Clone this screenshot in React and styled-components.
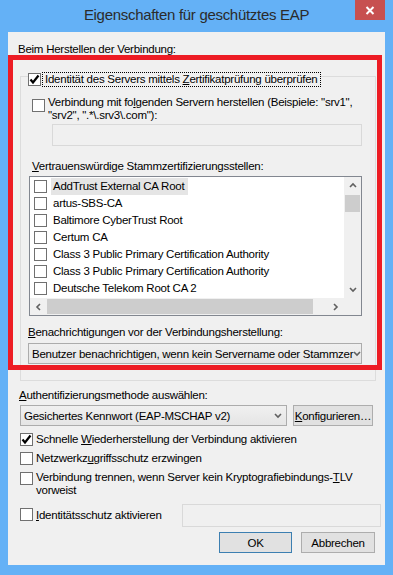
import React from "react";
import styled, { createGlobalStyle } from "styled-components";

const GlobalStyle = createGlobalStyle`
  html, body {
    margin: 0;
    padding: 0;
  }
  body {
    font-family: "Liberation Sans", Arial, sans-serif;
    font-size: 11.5px;
    letter-spacing: -0.25px;
    color: #000;
  }
`;

const Window = styled.div`
  position: relative;
  width: 393px;
  height: 575px;
  box-sizing: border-box;
  padding: 0 8px 10px 8px;
  background: #64b1f6;
  display: flex;
  flex-direction: column;
  overflow: hidden;
`;

const TitleBar = styled.div`
  height: 32px;
  flex: none;
  display: grid;
  grid-template-columns: 1fr auto 1fr;
`;

const Title = styled.div`
  grid-column: 2;
  font-size: 15px;
  letter-spacing: -0.3px;
  line-height: 30px;
  color: #2b2b2b;
`;

const CloseButton = styled.div`
  grid-column: 3;
  justify-self: end;
  width: 30px;
  height: 20px;
  background: #c75050;
  display: flex;
  align-items: center;
  justify-content: center;
`;

const Client = styled.div`
  flex: 1;
  background: #f0f0f0;
  display: flex;
  flex-direction: column;
  padding-top: 10px;
`;

const Label = styled.div`
  line-height: 15px;
  margin-left: ${({ $left }) => $left || 0}px;
  margin-top: ${({ $top }) => $top || 0}px;
  white-space: nowrap;
`;

const Group = styled.fieldset`
  margin: 9px 9px 0 12px;
  padding: 0 0 16px 0;
  border: 1px solid #dcdcdc;
  display: flex;
  flex-direction: column;
  align-items: flex-start;
  min-width: 0;
`;

const Legend = styled.legend`
  padding: 6px 0 0 0;
  margin-left: 7px;
`;

const LegendInner = styled.span`
  display: flex;
  align-items: center;
  height: 14px;
  gap: 2px;
`;

const Focus = styled.span`
  outline: 1px dotted #000;
  outline-offset: 0;
  line-height: 13px;
  padding: 0 2px 0 2px;
  white-space: nowrap;
`;

const CheckRow = styled.div`
  display: flex;
  align-items: flex-start;
  gap: 3px;
  margin-left: ${({ $left }) => $left || 0}px;
  margin-top: ${({ $top }) => $top || 0}px;
`;

const CheckText = styled.div`
  line-height: ${({ $lh }) => $lh || 15}px;
  white-space: nowrap;
`;

const Box = styled.span`
  flex: none;
  box-sizing: border-box;
  width: 13px;
  height: 13px;
  border: 1px solid #707070;
  background: #fff;
  display: flex;
  align-items: center;
  justify-content: center;
  margin-top: ${({ $top }) => $top || 0}px;
`;

const TextInput = styled.div`
  box-sizing: border-box;
  width: ${({ $w }) => $w}px;
  height: ${({ $h }) => $h}px;
  margin-left: ${({ $left }) => $left || 0}px;
  margin-top: ${({ $top }) => $top || 0}px;
  margin-right: ${({ $right }) => $right || 0}px;
  border: 1px solid #d9d9d9;
  background: #f0f0f0;
`;

const List = styled.div`
  box-sizing: border-box;
  width: 333px;
  height: 140px;
  margin-left: 8px;
  margin-top: 2px;
  border: 1px solid #828790;
  background: #fff;
  display: grid;
  grid-template-columns: 1fr 17px;
  grid-template-rows: 1fr 17px;
`;

const ListBody = styled.div`
  overflow: hidden;
  padding-top: 1px;
`;

const ListRow = styled.div`
  height: 17px;
  display: flex;
  align-items: center;
  padding-left: 4px;
  gap: 4px;
`;

const RowText = styled.span`
  line-height: 17px;
  padding: 0 4px 0 2px;
  background: ${({ $sel }) => ($sel ? "#e5e5e5" : "transparent")};
  white-space: nowrap;
`;

const VScroll = styled.div`
  background: #f0f0f0;
  display: flex;
  flex-direction: column;
`;

const ScrollBtn = styled.div`
  flex: none;
  width: 17px;
  height: 17px;
  display: flex;
  align-items: center;
  justify-content: center;
`;

const VThumb = styled.div`
  height: 17px;
  margin: 1px 1px 0 1px;
  background: #cdcdcd;
`;

const Spacer = styled.div`
  flex: 1;
`;

const HScroll = styled.div`
  background: #f0f0f0;
  display: flex;
  align-items: stretch;
`;

const HThumb = styled.div`
  width: 266px;
  margin: 1px 0 1px 0;
  background: #cdcdcd;
`;

const Corner = styled.div`
  background: #f0f0f0;
`;

const Combo = styled.div`
  box-sizing: border-box;
  width: ${({ $w }) => $w}px;
  height: 21px;
  margin-left: ${({ $left }) => $left || 0}px;
  margin-top: ${({ $top }) => $top || 0}px;
  border: 1px solid #acacac;
  background: linear-gradient(#f0f0f0, #e5e5e5);
  display: flex;
  align-items: center;
  padding: 0 0 0 3px;
`;

const ComboText = styled.span`
  flex: 1;
  white-space: nowrap;
`;

const ComboArrow = styled.span`
  width: 17px;
  display: flex;
  justify-content: center;
`;

const Row = styled.div`
  display: flex;
  align-items: center;
  gap: ${({ $gap }) => $gap || 0}px;
  margin-left: ${({ $left }) => $left || 0}px;
  margin-top: ${({ $top }) => $top || 0}px;
`;

const Button = styled.div`
  box-sizing: border-box;
  width: ${({ $w }) => $w}px;
  height: 21px;
  border: 1px solid ${({ $default }) => ($default ? "#3c7fb1" : "#adadad")};
  background: #e1e1e1;
  display: flex;
  align-items: center;
  justify-content: center;
  white-space: nowrap;
`;

const ButtonBar = styled.div`
  display: flex;
  justify-content: flex-end;
  gap: 9px;
  margin: 5px 10px 0 0;
`;

const Annotation = styled.div`
  position: absolute;
  left: 8px;
  top: 55px;
  width: 374px;
  height: 315px;
  box-sizing: border-box;
  border: 5px solid #ed1c24;
  pointer-events: none;
`;

const Chevron = ({ dir }) => {
  const paths = {
    up: "M1 5 L4 2 L7 5",
    down: "M1 2 L4 5 L7 2",
    left: "M5 1 L2 4 L5 7",
    right: "M2 1 L5 4 L2 7",
  };
  return (
    <svg width="8" height="8" viewBox="0 0 8 8">
      <path d={paths[dir]} fill="none" stroke="#606060" strokeWidth="1.6" />
    </svg>
  );
};

const Check = ({ checked, top }) => (
  <Box $top={top}>
    {checked && (
      <svg width="11" height="11" viewBox="0 0 11 11">
        <path d="M1.5 5.5 L4 8.5 L9.5 1.5" fill="none" stroke="#000" strokeWidth="2.2" />
      </svg>
    )}
  </Box>
);

const certs = [
  "AddTrust External CA Root",
  "artus-SBS-CA",
  "Baltimore CyberTrust Root",
  "Certum CA",
  "Class 3 Public Primary Certification Authority",
  "Class 3 Public Primary Certification Authority",
  "Deutsche Telekom Root CA 2",
];

export default function App() {
  return (
    <>
      <GlobalStyle />
      <Window>
        <TitleBar>
          <Title>Eigenschaften für geschütztes EAP</Title>
          <CloseButton>
            <svg width="10" height="9" viewBox="0 0 10 9">
              <path d="M1.5 1 L8.5 8 M8.5 1 L1.5 8" stroke="#fff" strokeWidth="2" />
            </svg>
          </CloseButton>
        </TitleBar>
        <Client>
          <Label $left={10}>Beim Herstellen der Verbindung:</Label>
          <Group>
            <Legend>
              <LegendInner>
                <Check checked />
                <Focus>
                  Identität des Servers mittels <u>Z</u>ertifikatprüfung überprüfen
                </Focus>
              </LegendInner>
            </Legend>
            <CheckRow $left={11} $top={10}>
              <Check top={3} />
              <CheckText $lh={13}>
                Verbindung mit fo<u>l</u>genden Servern herstellen (Beispiele: "srv1",
                <br />
                "srv2", ".*\.srv3\.com"):
              </CheckText>
            </CheckRow>
            <TextInput $w={310} $h={22} $left={31} $top={2} />
            <Label $left={11} $top={13}>
              <u>V</u>ertrauenswürdige Stammzertifizierungsstellen:
            </Label>
            <List>
              <ListBody>
                {certs.map((c, i) => (
                  <ListRow key={i}>
                    <Check />
                    <RowText $sel={i === 0}>{c}</RowText>
                  </ListRow>
                ))}
              </ListBody>
              <VScroll>
                <ScrollBtn>
                  <Chevron dir="up" />
                </ScrollBtn>
                <VThumb />
                <Spacer />
                <ScrollBtn>
                  <Chevron dir="down" />
                </ScrollBtn>
              </VScroll>
              <HScroll>
                <ScrollBtn>
                  <Chevron dir="left" />
                </ScrollBtn>
                <HThumb />
                <Spacer />
                <ScrollBtn>
                  <Chevron dir="right" />
                </ScrollBtn>
              </HScroll>
              <Corner />
            </List>
            <Label $left={7} $top={9}>
              <u>B</u>enachrichtigungen vor der Verbindungsherstellung:
            </Label>
            <Combo $w={334} $left={7} $top={3}>
              <ComboText>Benutzer benachrichtigen, wenn kein Servername oder Stammzer</ComboText>
              <ComboArrow>
                <Chevron dir="down" />
              </ComboArrow>
            </Combo>
          </Group>
          <Label $left={11} $top={7}>
            <u>A</u>uthentifizierungsmethode auswählen:
          </Label>
          <Row $left={12} $top={2} $gap={6}>
            <Combo $w={267}>
              <ComboText>Gesichertes Kennwort (EAP-MSCHAP v2)</ComboText>
              <ComboArrow>
                <Chevron dir="down" />
              </ComboArrow>
            </Combo>
            <Button $w={80}>
              <u>K</u>onfigurieren…
            </Button>
          </Row>
          <CheckRow $left={12} $top={6}>
            <Check checked top={1} />
            <CheckText>
              Schnelle <u>W</u>iederherstellung der Verbindung aktivieren
            </CheckText>
          </CheckRow>
          <CheckRow $left={12} $top={4}>
            <Check top={1} />
            <CheckText>
              Netzwerkz<u>u</u>griffsschutz erzwingen
            </CheckText>
          </CheckRow>
          <CheckRow $left={12} $top={5}>
            <Check top={1} />
            <CheckText $lh={13}>
              Verbindung trennen, wenn Server kein Kryptografiebindungs-<u>T</u>LV
              <br />
              vorweist
            </CheckText>
          </CheckRow>
          <Row $left={12} $top={7}>
            <CheckRow>
              <Check />
              <CheckText>
                <u>I</u>dentitätsschutz aktivieren
              </CheckText>
            </CheckRow>
            <Spacer />
            <TextInput $w={199} $h={23} $right={4} />
          </Row>
          <ButtonBar>
            <Button $w={73} $default>
              OK
            </Button>
            <Button $w={74}>Abbrechen</Button>
          </ButtonBar>
        </Client>
        <Annotation />
      </Window>
    </>
  );
}
